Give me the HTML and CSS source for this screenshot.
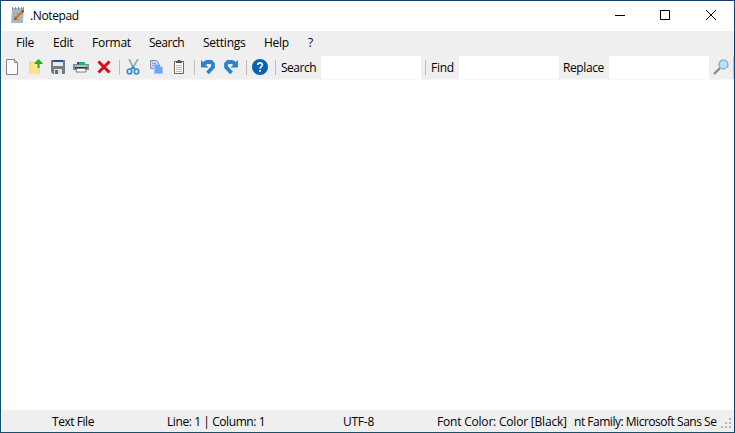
FILE: index.html
```html
<!DOCTYPE html>
<html lang="en">
<head>
<meta charset="utf-8">
<title>.Notepad</title>
<link rel="stylesheet" href="styles.css">
</head>
<body>
<div class="window">
  <header class="titlebar">
    <svg class="app-icon" width="16" height="18" viewBox="0 0 16 18"><path fill="#a9b9c1" d="M2 2h12l-1 15H1z"/><path fill="#82939b" d="M2 1h1v3H2zM5 1h1v3H5zM8 1h1v3H8zM11 1h1v3h-1zM13 1h1v3h-1z"/><path stroke="#8fa2aa" d="M3 7.5h8M3 10.5h6M3 13.5h7"/><path stroke="#e86c17" stroke-width="2.4" d="m6 12 6-6"/><path stroke="#813c27" stroke-width="2.4" d="m12 6 1.5-1.5"/><path fill="#5c4638" d="m4 14 1-3 2 2z"/></svg>
    <span class="title">.Notepad</span>
    <div class="controls">
      <svg width="46" height="30" viewBox="0 0 46 30"><path class="line" d="M18 14.5h10"/></svg>
      <svg width="46" height="30" viewBox="0 0 46 30"><path class="line" d="M17.5 9.5h9v9h-9z"/></svg>
      <svg width="46" height="30" viewBox="0 0 46 30"><path class="line" d="m17 9 10 10M27 9 17 19"/></svg>
    </div>
  </header>
  <nav class="menu">
    <span class="m-file">File</span><span class="m-edit">Edit</span><span class="m-format">Format</span><span class="m-search">Search</span><span class="m-settings">Settings</span><span class="m-help">Help</span><span>?</span>
  </nav>
  <div class="toolbar">
    <button aria-label="New"><svg viewBox="0 0 16 16"><path fill="#fbfbfb" stroke="#858585" d="M2.5.5h8l3 3v12h-11z"/><path fill="#ddd" stroke="#858585" d="M10.5.5v3h3"/></svg></button>
    <button aria-label="Open"><svg viewBox="0 0 16 16"><path fill="#ffe394" d="M2 2h6l1 2h4v11H2z"/><path fill="#fad985" d="M2 2h2v13H2zM11 6h2v9h-2z"/><path fill="#16b52b" d="m11.500 0 4 4v1h-3v4h-2V5h-3V4z"/></svg></button>
    <button aria-label="Save"><svg viewBox="0 0 16 16"><path fill="#747b82" d="M1 1h14v14H3l-2-2z"/><path fill="#15599a" d="M3 1h10v2H3z"/><path fill="#e6e9eb" d="M3 3h10v4H3z"/><path fill="#e2e4e5" d="M4 10h8v5H4z"/><path fill="#626970" d="M5 11h3v4H5z"/></svg></button>
    <button aria-label="Print"><svg viewBox="0 0 16 16"><path fill="#239bd0" d="M4 3h5v3H4z"/><path fill="#1dbd5e" d="M9 3h3v3H9z"/><path fill="#1746d5" d="M4 3h2v2H4z"/><path fill="#858b90" d="M0 5h4v1h8V5h4v6H0z"/><path fill="#b8bdc0" d="M2 6h12v2H2z"/><path fill="#363b3e" d="M2 8h12v2H2z"/><path fill="#fff" stroke="#777d80" d="M3.500 9.500h9l.5 3.500H3z"/></svg></button>
    <button aria-label="Delete"><svg viewBox="0 0 16 16"><path stroke="#db0c19" stroke-width="3" d="m2.5 2.5 11 11M13.5 2.5l-11 11"/></svg></button>
    <i class="sep"></i>
    <button aria-label="Cut"><svg viewBox="0 0 16 16"><path stroke="#8baebb" stroke-width="1.700" d="M4 0 9 10M13 0 7 10"/><g fill="none" stroke="#2c8bd0" stroke-width="1.600"><ellipse cx="4.500" cy="12.500" rx="2.200" ry="2.500"/><ellipse cx="11.500" cy="12.500" rx="2.200" ry="2.500"/><path d="m6 10 2-2 2 2"/></g></svg></button>
    <button aria-label="Copy"><svg viewBox="0 0 16 16"><path fill="#c3d7f5" stroke="#8795b2" d="M2.500 1.500h6l2 2v6h-8z"/><path stroke="#8ba5d0" d="M4 4.500h4M4 6.500h3"/><path fill="#69a6ff" stroke="#a9c3ed" d="M6.500 5.500h5l3 3v6h-8z"/><path fill="#e6f0ff" stroke="#718cc2" stroke-width=".7" d="M11.500 5.500v3h3"/></svg></button>
    <button aria-label="Paste"><svg viewBox="0 0 16 16"><path fill="#fff" stroke="#80634c" d="M3.500 2.500h9v12h-9z"/><path fill="#4b5656" d="M5 2h1l1-1h2l1 1h1v2H5z"/><path stroke="#a9bdc2" d="M5 6.500h6M5 8.500h6M5 10.500h6M5 12.500h6"/></svg></button>
    <i class="sep"></i>
    <button aria-label="Undo"><svg viewBox="0 0 16 16"><path class="arrow-head" d="M1 1v7.500h7.500z"/><path class="arrow" d="M4 4.500 7 3h4l2 2v3l-5.500 6"/></svg></button>
    <button aria-label="Redo"><svg viewBox="0 0 16 16"><path class="arrow-head" d="M15 1v7.500H7.500z"/><path class="arrow" d="M12 4.500 9 3H5L3 5v3l5.500 6"/></svg></button>
    <i class="sep"></i>
    <button aria-label="Help"><svg viewBox="0 0 16 16"><circle cx="8" cy="8" r="8" fill="#0862b1"/><path fill="none" stroke="#fff" stroke-width="1.700" d="M5.700 6c.1-3 4.900-2.800 4.600 0-.2 1.600-2.200 1.600-2.200 3.700"/><path fill="#fff" d="M7.200 11h1.800v1.800H7.200z"/></svg></button>
    <i class="sep"></i>
    <label class="l-search"><span>Search</span><input type="text"></label>
    <i class="sep"></i>
    <label class="l-find"><span>Find</span><input type="text"></label>
    <label class="l-replace"><span>Replace</span><input type="text"></label>
    <button class="go" aria-label="Find next"><svg viewBox="0 0 16 16"><path stroke="#7c8990" stroke-width="2.200" d="m1 15 6-6"/><circle cx="10.500" cy="5.500" r="4.500" fill="#b9e0fb" stroke="#83a1b5" stroke-width="1.200"/></svg></button>
  </div>
  <main class="editor"></main>
  <footer class="status">
    <span class="s-type">Text File</span>
    <span class="s-pos">Line: 1 | Column: 1</span>
    <span class="s-enc">UTF-8</span>
    <span class="s-color">Font Color: Color [Black]</span>
    <span class="s-family"><span>nt Family: Microsoft Sans Se</span></span>
    <svg class="grip" width="12" height="12" viewBox="0 0 12 12"><path fill="#b5b5b5" d="M8 0h2v2H8zM4 4h2v2H4zM8 4h2v2H8zM0 8h2v2H0zM4 8h2v2H4zM8 8h2v2H8z"/></svg>
  </footer>
</div>
</body>
</html>
```
FILE: styles.css
```css
* { box-sizing: border-box; }
body { margin: 0; overflow: hidden; }
.window {
  width: 735px; height: 433px; display: flex; flex-direction: column;
  border: 1px solid; border-color: #173d6b #173d6b #17506b #17506b;
  background: #fff; color: #000;
  font: 12px/16px "Open Sans", "Noto Sans", sans-serif; letter-spacing: -.25px;
  white-space: nowrap;
}
.titlebar { height: 30px; display: flex; align-items: center; padding-left: 9px; flex: none; }
.app-icon { margin: 0 4px 2px 0; }
.title { letter-spacing: -.37px; }
.controls { margin: 0 -1px 0 auto; display: flex; }
.line { fill: none; stroke: #000; }
.menu { height: 25px; flex: none; display: flex; align-items: center; background: #efefef; padding: 0 0 2px 15px; }
.menu span { flex: none; }
.m-file { width: 37px; }
.m-edit { width: 39px; }
.m-format { width: 57px; }
.m-search { width: 54px; letter-spacing: -.5px; }
.m-settings { width: 61px; }
.m-help { width: 44px; }
.toolbar { height: 24px; flex: none; display: flex; background: #efefef; border-bottom: 1px solid #f5f5f5; }
.toolbar button { width: 23px; height: 23px; flex: none; border: 0; padding: 3px 0 0 3px; background: none; display: flex; }
.toolbar button svg { width: 16px; height: 16px; }
.arrow { fill: none; stroke: #2b83cf; stroke-width: 3.8; }
.arrow-head { fill: #2b83cf; }
.sep { width: 6px; height: 15px; flex: none; margin-top: 4px; background: linear-gradient(#bdbdbd, #bdbdbd) 3px 0 / 1px 100% no-repeat; }
.toolbar label { display: flex; flex: none; align-items: center; height: 23px; padding-left: 3px; }
.toolbar input { width: 100px; height: 23px; margin: 0 1px 0 0; padding: 0; border: 0; background: #fff; }
.l-search span { width: 40px; letter-spacing: -.5px; }
.l-find span { width: 28px; }
.l-replace span { width: 46px; letter-spacing: -.4px; }
.toolbar .go { width: 24px; border-right: 1px solid #b4cbd1; }
.editor { flex: 1; }
.status { height: 22px; flex: none; display: flex; align-items: center; background: #efefef; padding: 1px 1px 0 51px; }
.status > span { flex: none; }
.s-type { width: 115px; letter-spacing: -.45px; }
.s-pos { width: 176px; letter-spacing: -.42px; }
.s-enc { width: 94px; }
.s-color { width: 137px; letter-spacing: -.2px; }
.s-family { width: 144px; overflow: hidden; letter-spacing: -.48px; }
.grip { flex: none; margin: 4px 0 0 3px; }
```
